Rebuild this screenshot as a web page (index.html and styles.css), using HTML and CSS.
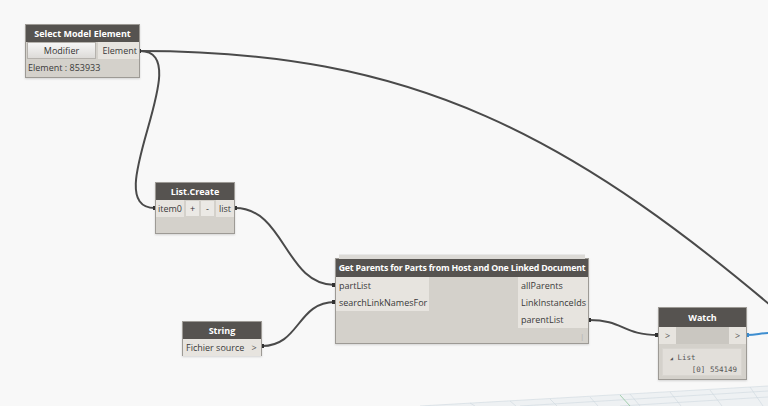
FILE: index.html
```html
<!DOCTYPE html>
<html lang="en">
<head>
    <meta charset="UTF-8">
    <title>Dynamo - Graph</title>
    <link rel="stylesheet" href="styles.css">
</head>
<body>

<div class="canvas">

    <!-- background preview grid -->
    <svg class="grid" width="768" height="406" viewBox="0 0 768 406">
        <polygon points="420,406 768,386 768,406" fill="#eef1f3"/>
        <g stroke="#cfd8df" stroke-width="0.6">
            <line x1="420" y1="406" x2="768" y2="386"/>
            <line x1="520" y1="406" x2="768" y2="391"/>
            <line x1="620" y1="406" x2="768" y2="397"/>
            <line x1="470" y1="403" x2="475" y2="406"/>
            <line x1="510" y1="401" x2="516" y2="406"/>
            <line x1="550" y1="399" x2="557" y2="406"/>
            <line x1="590" y1="397" x2="598" y2="406"/>
            <line x1="630" y1="394" x2="640" y2="406"/>
            <line x1="670" y1="392" x2="681" y2="406"/>
            <line x1="710" y1="390" x2="722" y2="406"/>
            <line x1="750" y1="387" x2="763" y2="406"/>
        </g>
        <line x1="620" y1="395" x2="630" y2="406" stroke="#8fc79a" stroke-width="0.8"/>
    </svg>

    <!-- connectors -->
    <svg class="wires" width="768" height="406" viewBox="0 0 768 406">
        <g fill="none" stroke="#4a4a4a" stroke-width="2">
            <path d="M140,51 C 410,51 570,130 805,335"/>
            <path d="M140,51 C 200,51 95,208 155,208"/>
            <path d="M235,208 C 285,208 285,285 335,285"/>
            <path d="M262,346 C 300,346 297,302 335,302"/>
            <path d="M589,320 C 623,320 623,335 658,335"/>
        </g>
        <path d="M747,335 C 757,335 760,333 768,333" fill="none" stroke="#3e8ed0" stroke-width="2"/>
        <g fill="#333">
            <rect x="138" y="49" width="3" height="4"/>
            <rect x="153" y="206" width="3" height="4"/>
            <rect x="234" y="206" width="3" height="4"/>
            <rect x="332" y="283" width="3" height="4"/>
            <rect x="332" y="300" width="3" height="4"/>
            <rect x="261" y="344" width="3" height="4"/>
            <rect x="588" y="318" width="3" height="4"/>
            <rect x="655" y="333" width="3" height="4"/>
        </g>
        <rect x="746" y="333" width="3" height="4" fill="#3e8ed0"/>
    </svg>

    <div class="node n-select">
        <div class="node-title">Select Model Element</div>
        <div class="node-row">
            <button class="node-btn wide">Modifier</button>
            <span class="port out">Element</span>
        </div>
        <div class="node-info">Element : 853933</div>
    </div>

    <div class="node n-list">
        <div class="node-title">List.Create</div>
        <div class="node-row">
            <span class="port in">item0</span>
            <span class="node-btn small">+</span>
            <span class="node-btn small">-</span>
            <span class="port out">list</span>
        </div>
    </div>

    <div class="node n-parents">
        <div class="node-title">Get Parents for Parts from Host and One Linked Document</div>
        <div class="node-ports">
            <div class="port-col">
                <span class="port in">partList</span>
                <span class="port in">searchLinkNamesFor</span>
            </div>
            <div class="port-col">
                <span class="port out">allParents</span>
                <span class="port out">LinkInstanceIds</span>
                <span class="port out">parentList</span>
            </div>
        </div>
        <span class="node-mark">|</span>
    </div>

    <div class="node n-string">
        <div class="node-title">String</div>
        <div class="node-row">
            <span class="port in-text">Fichier source</span>
            <span class="port arrow">&gt;</span>
        </div>
    </div>

    <div class="node n-watch">
        <div class="node-title">Watch</div>
        <div class="node-row">
            <span class="port arrow">&gt;</span>
            <span class="spacer"></span>
            <span class="port arrow">&gt;</span>
        </div>
        <div class="watch-box">
            <div class="watch-line"><span class="tri">&#9698;</span> List</div>
            <div class="watch-line item">[0] 554149</div>
        </div>
    </div>

</div>

</body>
</html>
```

FILE: styles.css
```css
body {
    margin: 0;
    background: #f8f8f8;
    font-family: "Open Sans", "DejaVu Sans", sans-serif;
}

.canvas {
    position: relative;
    width: 768px;
    height: 406px;
    overflow: hidden;
    background: #f8f8f8;
}

.grid,
.wires {
    position: absolute;
    left: 0;
    top: 0;
}

.node {
    position: absolute;
    box-sizing: border-box;
    background: #d4d1cb;
    border: 1px solid #9d9a95;
    box-shadow: 0 1px 2px rgba(0,0,0,0.15);
    font-size: 9px;
    color: #3a3a3a;
}

.node-title {
    height: 17px;
    line-height: 17px;
    background: #565350;
    color: #fff;
    font-weight: bold;
    text-align: center;
    white-space: nowrap;
    overflow: hidden;
}

.node-row {
    display: flex;
    align-items: stretch;
    height: 17px;
    gap: 2px;
}

.port {
    display: flex;
    align-items: center;
    background: #e7e4df;
    padding: 0 3px;
    white-space: nowrap;
    height: 17px;
    box-sizing: border-box;
}

.port.out {
    justify-content: flex-end;
}

.node-btn {
    font-family: inherit;
    font-size: 9px;
    color: #333;
    border: 1px solid #b5b2ad;
    background: linear-gradient(#f6f6f6, #dddbd8);
    display: flex;
    align-items: center;
    justify-content: center;
    padding: 0;
    box-sizing: border-box;
}

.node-btn.wide {
    flex: 1;
    margin: 0 0 0 1px;
}

.node-btn.small {
    width: 14px;
    height: 15px;
    margin-top: 1px;
    background: #ebe9e5;
    border: none;
}

.node-info {
    height: 17px;
    line-height: 17px;
    padding-left: 2px;
}

/* Select Model Element */
.n-select {
    left: 25px;
    top: 24px;
    width: 115px;
    height: 54px;
}

.n-select .port.out {
    width: 41px;
    padding-right: 2px;
}

/* List.Create */
.n-list {
    left: 155px;
    top: 182px;
    width: 80px;
    height: 52px;
}

.n-list .port.in {
    width: 28px;
    padding-left: 2px;
}

.n-list .port.out {
    flex: 1;
}

/* Get Parents */
.n-parents {
    left: 335px;
    top: 258px;
    width: 254px;
    height: 86px;
}

.n-parents .node-title {
    font-size: 8.8px;
    letter-spacing: -0.2px;
    height: 18px;
    line-height: 18px;
}

.n-parents::before {
    content: "";
    position: absolute;
    left: 3px;
    right: 3px;
    top: -5px;
    height: 4px;
    background: #dcdad6;
    border-top: 1px solid #e8e8e8;
}

.node-ports {
    display: flex;
    justify-content: space-between;
}

.port-col {
    display: flex;
    flex-direction: column;
}

.n-parents .port-col:first-child .port {
    width: 93px;
}

.n-parents .port-col:last-child .port {
    width: 70px;
    justify-content: flex-start;
    padding-left: 3px;
}

.node-mark {
    position: absolute;
    right: 4px;
    bottom: 2px;
    color: #aaa;
    font-size: 7px;
}

/* String */
.n-string {
    left: 182px;
    top: 321px;
    width: 80px;
    height: 35px;
}

.port.in-text {
    flex: 1;
    padding-left: 3px;
}

.port.arrow {
    width: 17px;
    justify-content: center;
    color: #555;
}

.n-string .node-row {
    gap: 0;
}

/* Watch */
.n-watch {
    left: 658px;
    top: 307px;
    width: 89px;
    height: 73px;
}

.n-watch .node-title {
    height: 19px;
    line-height: 19px;
}

.n-watch .node-row {
    gap: 0;
}

.spacer {
    flex: 1;
    background: #cac7c1;
}

.watch-box {
    margin: 4px 4px 0 3px;
    height: 28px;
    background: #e2dfda;
    border: 1px solid #d8d5d0;
    box-sizing: border-box;
    padding: 3px 4px 0 7px;
    font-family: "DejaVu Sans Mono", "Liberation Mono", monospace;
    font-size: 7.5px;
    color: #555;
    line-height: 11px;
}

.watch-line.item {
    text-align: right;
}

.tri {
    font-size: 5px;
}
```
